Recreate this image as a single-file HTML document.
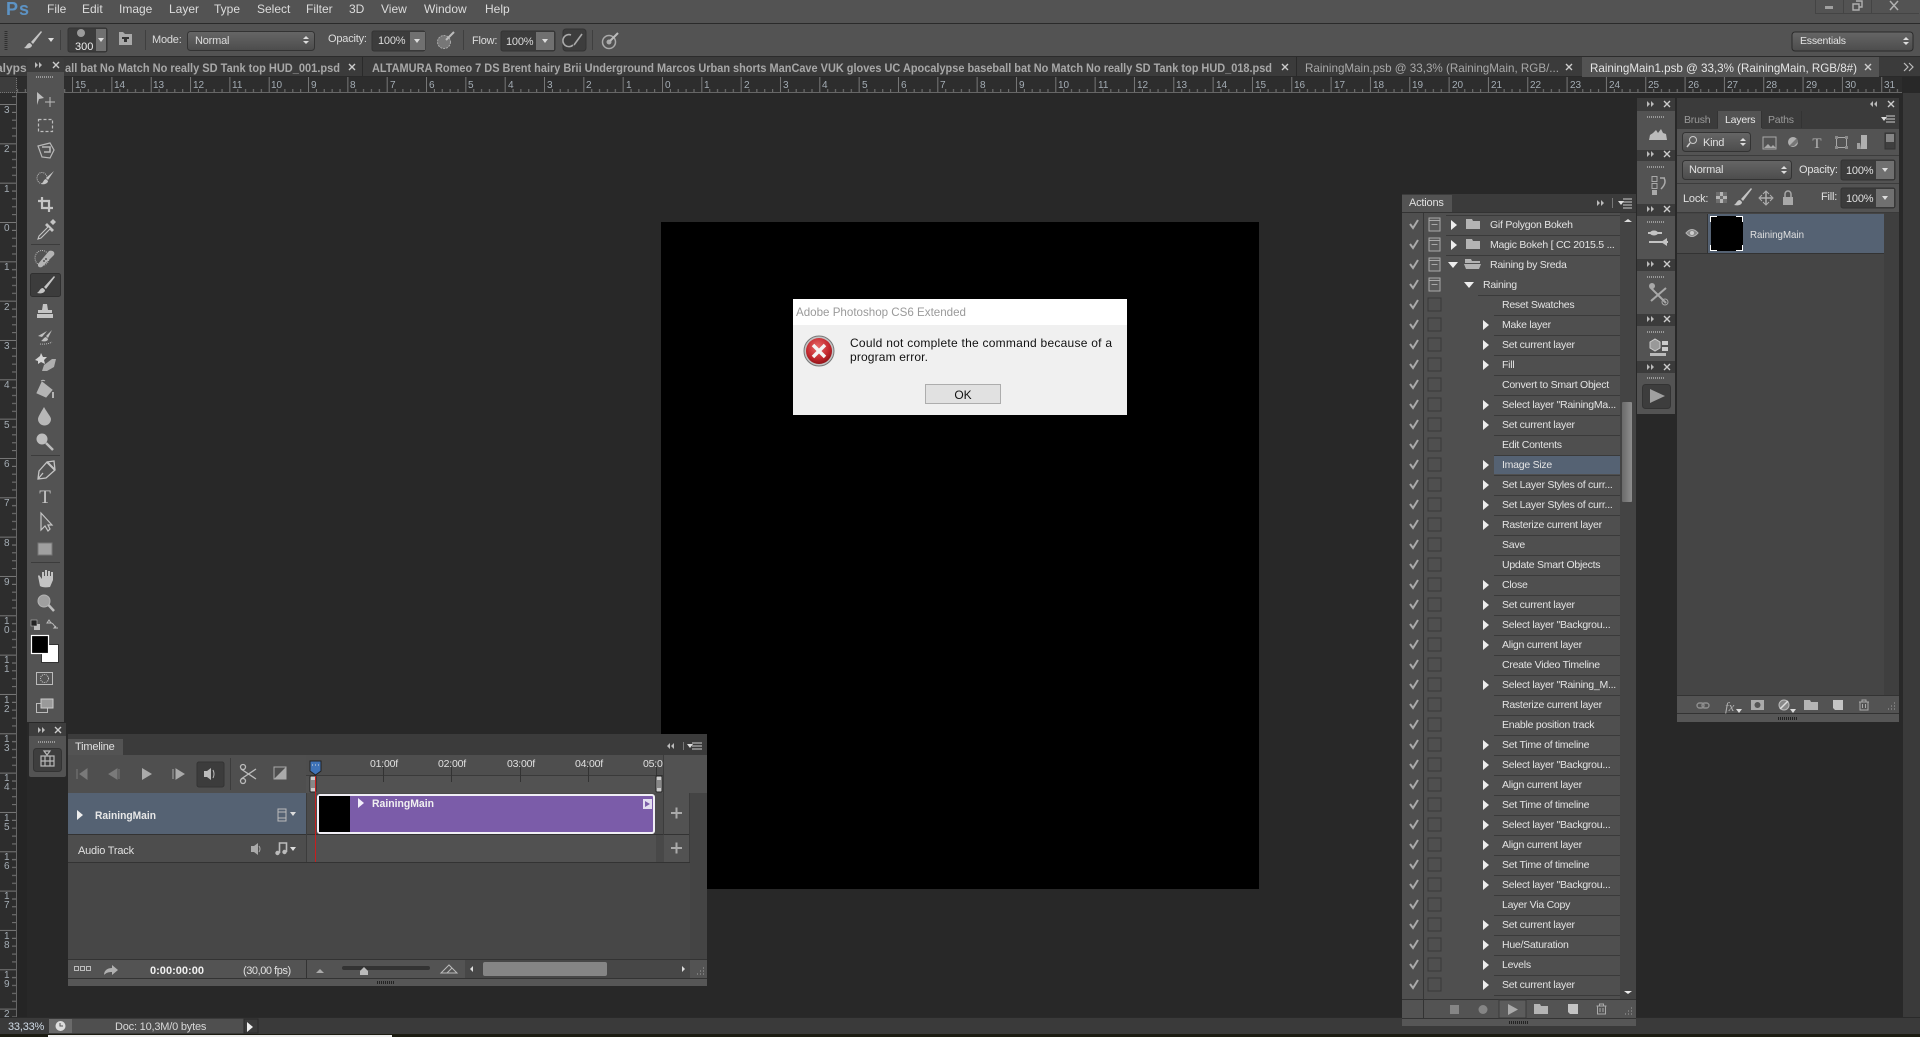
<!DOCTYPE html>
<html><head><meta charset="utf-8"><title>Photoshop</title>
<style>
html,body{margin:0;padding:0;background:#282828;width:1920px;height:1037px;overflow:hidden}
svg{display:block;font-family:"Liberation Sans",sans-serif}
.m{font-size:12px;fill:#dcdcdc}
.o{font-size:11px;fill:#dcdcdc;letter-spacing:-.2px}
.tb{font-size:12px;fill:#a8a8a8;font-weight:bold}
.rn{font-size:10px;fill:#a4adb5}
.a{font-size:10.5px;fill:#e4e4e4;letter-spacing:-.25px}
.p{font-size:11px;fill:#e0e0e0;letter-spacing:-.2px}
.d{font-size:12px;fill:#111}
</style></head><body>
<svg xmlns="http://www.w3.org/2000/svg" width="1920" height="1037" viewBox="0 0 1920 1037">
<defs>
<pattern id="rh" patternUnits="userSpaceOnUse" x="662" y="77" width="39.33" height="16">
<path d="M.5 0V16M8.4 12V16M16.2 12V16M24.1 12V16M32 12V16" stroke="#777" stroke-width="1" fill="none"/></pattern>
<pattern id="rv" patternUnits="userSpaceOnUse" x="0" y="222" width="16" height="39.33">
<path d="M0 .5H16M12 8.4H16M12 16.2H16M12 24.1H16M12 32H16" stroke="#777" stroke-width="1" fill="none"/></pattern>
<polygon id="ra" points="0,-5 6,0 0,5" fill="#eee"/>
<polygon id="da" points="-5,-3 5,-3 0,3" fill="#eee"/>
<path id="ck" d="M-4 0L-1 4L4 -4" stroke="#aaa" stroke-width="2" fill="none"/>
<rect id="bx" x="-6.5" y="-6.5" width="13" height="13" fill="none" stroke="#383838"/>
<g id="bd"><rect x="-5.5" y="-6.5" width="11" height="13" fill="#5a5a5a" stroke="#a8a8a8"/><path d="M-3 0H3" stroke="#a8a8a8"/><path d="M-5 -4H5" stroke="#a8a8a8"/></g>
<path id="fo" d="M-7 -5H-1L0 -3H7V5H-7Z" fill="#b4b4b4"/>
<path id="dbr" d="M-3 -3L0 0L-3 3ZM1 -3L4 0L1 3Z" fill="#bbb"/>
<path id="dbl" d="M0 -3L-3 0L0 3ZM4 -3L1 0L4 3Z" fill="#bbb"/>
<path id="xx" d="M-3 -3L3 3M3 -3L-3 3" stroke="#ccc" stroke-width="1.4"/>
<path id="gr" d="M-9 0H9" stroke="#999" stroke-width="2" stroke-dasharray="1 1"/>
<path id="brush" d="M9 -9L-1 2L1 4L10 -8ZM-2 3C-5 3 -5 6 -8 8C-4 9 0 8 0 5Z" fill="#c4c4c4"/>
<g id="trash" fill="none" stroke="#aaa"><path d="M-5 -3H5M-2 -3V-5H2V-3"/><path d="M-4 -3V5H4V-3M-1.5 -1V3M1.5 -1V3"/></g>
<path id="newl" d="M-5 -5H5V5H-3L-5 3Z" fill="#c4c4c4"/>
<g id="arrdrop"><polygon points="-3,-2 3,-2 0,2" fill="#ddd"/></g>
<g id="spin"><polygon points="-3,-1 3,-1 0,-4" fill="#ddd"/><polygon points="-3,1 3,1 0,4" fill="#ddd"/></g>
<g id="grip"><path d="M0 6h2M3 6h2M6 6h2M3 3h2M6 3h2M6 0h2" stroke="#888" stroke-width="1.4" stroke-dasharray="1 1"/></g>
<linearGradient id="sel" x1="0" y1="0" x2="0" y2="1"><stop offset="0" stop-color="#666"/><stop offset="1" stop-color="#4c4c4c"/></linearGradient>
<radialGradient id="err" cx=".45" cy=".35" r=".75"><stop offset="0" stop-color="#e86a6a"/><stop offset=".6" stop-color="#c2272d"/><stop offset="1" stop-color="#7d0b10"/></radialGradient>
<linearGradient id="scr" x1="0" y1="0" x2="1" y2="0"><stop offset="0" stop-color="#6a6a6a"/><stop offset="1" stop-color="#8e8e8e"/></linearGradient>
</defs>

<!-- base -->
<rect width="1920" height="1037" fill="#282828"/>
<!-- menu bar -->
<rect width="1920" height="23" fill="#535353"/>
<rect y="23" width="1920" height="1" fill="#2a2a2a"/>
<text x="6" y="15" font-size="18" font-weight="bold" fill="#5d93c4" style="letter-spacing:1px">Ps</text>
<text class="m" x="47" y="13">File</text><text class="m" x="82" y="13">Edit</text><text class="m" x="119" y="13">Image</text><text class="m" x="169" y="13">Layer</text><text class="m" x="214" y="13">Type</text><text class="m" x="257" y="13">Select</text><text class="m" x="306" y="13">Filter</text><text class="m" x="349" y="13">3D</text><text class="m" x="381" y="13">View</text><text class="m" x="424" y="13">Window</text><text class="m" x="485" y="13">Help</text>
<!-- window buttons -->
<path d="M1815.5 0V13.5H1919" fill="none" stroke="#444"/><path d="M1843.5 0V13M1871.5 0V13" stroke="#444"/>
<rect x="1825" y="6" width="8" height="3" fill="#a0a0a0"/><path d="M1853 4h6v6h-6zM1856 1h6v6h-3" fill="none" stroke="#b0b0b0" stroke-width="1.4"/><path d="M1890 1l8 9M1898 1l-8 9" stroke="#b0b0b0" stroke-width="1.5"/>

<!-- options bar -->
<rect y="24" width="1920" height="33" fill="#535353"/>
<rect y="56" width="1920" height="1" fill="#2c2c2c"/>
<path d="M6 31V50" stroke="#2f2f2f" stroke-width="3" stroke-dasharray="1 1"/>
<use href="#brush" x="32" y="40"/>
<use href="#arrdrop" x="51" y="40"/>
<path d="M60.5 30V50" stroke="#3f3f3f"/>
<rect x="68" y="28" width="39" height="24" rx="2" fill="#3c3c3c" stroke="#333"/><rect x="96" y="29" width="10" height="22" fill="#707070"/>
<circle cx="81" cy="33" r="4" fill="#bbb" opacity=".75"/>
<text x="75" y="50" font-size="11" fill="#eee">300</text><use href="#arrdrop" x="101" y="40"/>
<path d="M119 32h4l2 2h7v11h-13z" fill="#a9a9a9"/><path d="M122 37h7v2h-2v3h-3v-3h-2z" fill="#333"/>
<path d="M145.500 30V50" stroke="#3f3f3f"/>
<text class="o" x="152" y="43">Mode:</text>
<rect x="187.500" y="31.500" width="127" height="19" rx="3" fill="url(#sel)" stroke="#333"/>
<text class="o" x="195" y="44">Normal</text><use href="#spin" x="306" y="40"/>
<text class="o" x="328" y="42">Opacity:</text>
<rect x="372" y="31" width="53" height="20" rx="2" fill="#3c3c3c" stroke="#333"/><rect x="410" y="32" width="15" height="18" fill="#707070"/>
<text class="o" x="378" y="44">100%</text><use href="#arrdrop" x="417" y="41"/>
<circle cx="444" cy="42" r="6.500" fill="#777" stroke="#aaa" stroke-dasharray="2 1"/><path d="M446 40L454 32" stroke="#bbb" stroke-width="2"/>
<path d="M463.500 30V50" stroke="#3f3f3f"/>
<text class="o" x="472" y="44">Flow:</text>
<rect x="501" y="31" width="54" height="20" rx="2" fill="#3c3c3c" stroke="#333"/><rect x="536" y="32" width="18" height="18" fill="#707070"/>
<text class="o" x="506" y="45">100%</text><use href="#arrdrop" x="545" y="41"/>
<rect x="563" y="29" width="23" height="22" rx="3" fill="#3d3d3d" stroke="#333"/><path d="M571 35a6 6 0 1 0 2 10M574 45L582 34" fill="none" stroke="#aaa" stroke-width="1.600"/>
<path d="M592.500 30V50" stroke="#3f3f3f"/>
<circle cx="609" cy="42" r="6.500" fill="none" stroke="#aaa" stroke-width="1.500"/><circle cx="609" cy="42" r="2.500" fill="#aaa"/><path d="M610 41L618 33" stroke="#bbb" stroke-width="2"/>
<rect x="1792" y="32" width="121" height="19" rx="3" fill="url(#sel)" stroke="#2a2a2a"/>
<text x="1800" y="44" font-size="10.500" fill="#e4e4e4" style="letter-spacing:-.2px">Essentials</text><use href="#spin" x="1906" y="41"/>

<!-- tab bar -->
<rect y="57" width="1920" height="20" fill="#3b3b3b"/>
<rect y="76" width="1920" height="1" fill="#2a2a2a"/>
<text class="tb" x="-4" y="72">alypse</text>
<rect x="65" y="57" width="297" height="19" fill="#3b3b3b"/>
<text class="tb" x="65" y="72" textLength="275" lengthAdjust="spacingAndGlyphs">all bat No Match No really SD Tank top HUD_001.psd</text>
<use href="#xx" x="352" y="67"/><path d="M362.500 57V76" stroke="#2a2a2a"/>
<text class="tb" x="372" y="72" textLength="900" lengthAdjust="spacingAndGlyphs">ALTAMURA Romeo 7 DS Brent hairy Brii Underground Marcos Urban shorts ManCave VUK gloves UC Apocalypse baseball bat No Match No really SD Tank top HUD_018.psd</text>
<use href="#xx" x="1285" y="67"/><path d="M1296.500 57V76" stroke="#2a2a2a"/>
<text class="tb" x="1305" y="72" textLength="254" lengthAdjust="spacingAndGlyphs" style="font-weight:normal">RainingMain.psb @ 33,3% (RainingMain, RGB/...</text>
<use href="#xx" x="1569" y="67"/>
<rect x="1582" y="57" width="297" height="20" fill="#535353"/>
<text x="1590" y="72" font-size="12" fill="#e6e6e6" textLength="267" lengthAdjust="spacingAndGlyphs">RainingMain1.psb @ 33,3% (RainingMain, RGB/8#)</text>
<use href="#xx" x="1868" y="67"/>
<path d="M1904 63l4 4l-4 4M1909 63l4 4l-4 4" fill="none" stroke="#bbb" stroke-width="1.200"/>

<!-- right strip -->
<rect x="1903" y="93" width="17" height="925" fill="#3a3a3a"/>

<!-- rulers -->
<rect y="77" width="1902" height="16" fill="#2d2d2d"/>
<rect y="77" width="1902" height="16" fill="url(#rh)"/>
<rect y="92" width="1902" height="1" fill="#666"/>
<rect x="0" y="93" width="16" height="925" fill="#2d2d2d"/>
<rect x="0" y="93" width="16" height="925" fill="url(#rv)"/>
<rect x="16" y="93" width="1" height="925" fill="#666"/>
<rect x="17" y="93" width="10" height="925" fill="#252525"/>
<rect x="0" y="77" width="17" height="16" fill="#3d3d3d"/>
<path d="M0 92.500H16.500V77" fill="none" stroke="#777" stroke-dasharray="1 1"/>
<g class="rn">
<text class="rn" x="75" y="88">15</text><text class="rn" x="114" y="88">14</text><text class="rn" x="153" y="88">13</text><text class="rn" x="193" y="88">12</text><text class="rn" x="232" y="88">11</text><text class="rn" x="271" y="88">10</text><text class="rn" x="311" y="88">9</text><text class="rn" x="350" y="88">8</text><text class="rn" x="390" y="88">7</text><text class="rn" x="429" y="88">6</text><text class="rn" x="468" y="88">5</text><text class="rn" x="508" y="88">4</text><text class="rn" x="547" y="88">3</text><text class="rn" x="586" y="88">2</text><text class="rn" x="626" y="88">1</text><text class="rn" x="665" y="88">0</text>
<text class="rn" x="704" y="88">1</text><text class="rn" x="744" y="88">2</text><text class="rn" x="783" y="88">3</text><text class="rn" x="822" y="88">4</text><text class="rn" x="862" y="88">5</text><text class="rn" x="901" y="88">6</text><text class="rn" x="940" y="88">7</text><text class="rn" x="980" y="88">8</text><text class="rn" x="1019" y="88">9</text><text class="rn" x="1058" y="88">10</text><text class="rn" x="1098" y="88">11</text><text class="rn" x="1137" y="88">12</text><text class="rn" x="1176" y="88">13</text><text class="rn" x="1216" y="88">14</text><text class="rn" x="1255" y="88">15</text><text class="rn" x="1294" y="88">16</text><text class="rn" x="1334" y="88">17</text><text class="rn" x="1373" y="88">18</text><text class="rn" x="1412" y="88">19</text><text class="rn" x="1452" y="88">20</text><text class="rn" x="1491" y="88">21</text><text class="rn" x="1530" y="88">22</text><text class="rn" x="1570" y="88">23</text><text class="rn" x="1609" y="88">24</text><text class="rn" x="1648" y="88">25</text><text class="rn" x="1688" y="88">26</text><text class="rn" x="1727" y="88">27</text><text class="rn" x="1766" y="88">28</text><text class="rn" x="1806" y="88">29</text><text class="rn" x="1845" y="88">30</text><text class="rn" x="1884" y="88">31</text>
<text class="rn" x="4" y="113">3</text><text class="rn" x="4" y="152">2</text><text class="rn" x="4" y="192">1</text><text class="rn" x="4" y="231">0</text><text class="rn" x="4" y="270">1</text><text class="rn" x="4" y="310">2</text><text class="rn" x="4" y="349">3</text><text class="rn" x="4" y="388">4</text><text class="rn" x="4" y="428">5</text><text class="rn" x="4" y="467">6</text><text class="rn" x="4" y="506">7</text><text class="rn" x="4" y="546">8</text><text class="rn" x="4" y="585">9</text>
<text class="rn" x="4" y="624">1</text><text class="rn" x="4" y="633">0</text><text class="rn" x="4" y="663">1</text><text class="rn" x="4" y="672">1</text><text class="rn" x="4" y="703">1</text><text class="rn" x="4" y="712">2</text><text class="rn" x="4" y="742">1</text><text class="rn" x="4" y="751">3</text><text class="rn" x="4" y="781">1</text><text class="rn" x="4" y="790">4</text><text class="rn" x="4" y="821">1</text><text class="rn" x="4" y="830">5</text><text class="rn" x="4" y="860">1</text><text class="rn" x="4" y="869">6</text><text class="rn" x="4" y="899">1</text><text class="rn" x="4" y="908">7</text><text class="rn" x="4" y="939">1</text><text class="rn" x="4" y="948">8</text><text class="rn" x="4" y="978">1</text><text class="rn" x="4" y="987">9</text><text class="rn" x="4" y="1017">2</text>
</g>

<!-- canvas -->
<rect x="661" y="222" width="598" height="667" fill="#000"/>

<!-- toolbar -->
<rect x="27" y="72" width="37" height="650" fill="#535353"/>
<rect x="27" y="58" width="37" height="14" rx="2" fill="#3d3d3d"/>
<use href="#dbr" x="38" y="65"/><use href="#xx" x="56" y="65"/>
<use href="#gr" x="45" y="77"/>
<!-- move -->
<path d="M37 92L44 98L39 99L37 105Z" fill="#bdbdbd"/><path d="M45 102H55M50 97V107" stroke="#bdbdbd"/>
<!-- marquee -->
<rect x="38.500" y="119.500" width="14" height="12" fill="none" stroke="#bdbdbd" stroke-width="1.200" stroke-dasharray="3 2"/>
<!-- 3d lasso-like -->
<path d="M38 146L50 143L54 150L50 158L42 157L38 146Z" fill="none" stroke="#b8b8b8" stroke-width="1.200"/><path d="M42 147h8v5h-6" fill="none" stroke="#b8b8b8" stroke-width="1.600"/>
<!-- quick select -->
<ellipse cx="42" cy="178" rx="5" ry="5.500" fill="none" stroke="#c0c0c0" stroke-dasharray="1 1"/><path d="M54 171L46 178L48 180ZM46 179C43 180 44 182 41 184C45 185 48 183 48 181Z" fill="#c4c4c4"/>
<!-- crop -->
<path d="M42 197V208H53M38 201H49V212" fill="none" stroke="#c4c4c4" stroke-width="2.200"/>
<!-- eyedropper -->
<path d="M50 222L53 219L56 222L53 225ZM47 223L54 230L52 232L45 225Z" fill="#c4c4c4"/><path d="M48 227L39 236L38 239L41 238L50 229" fill="#555" stroke="#c4c4c4" stroke-width="1.100"/>
<rect x="31" y="244" width="29" height="1" fill="#3c3c3c"/>
<!-- heal -->
<ellipse cx="42" cy="258" rx="7" ry="7.500" fill="none" stroke="#bbb" stroke-dasharray="1 1"/><path d="M38 264L49 251Q52 250 54 252Q55 255 53 256L42 267Q39 268 38 266Z" fill="#b4b4b4"/><circle cx="46" cy="259" r="1" fill="#555"/><circle cx="44" cy="261" r="1" fill="#555"/>
<!-- brush active -->
<rect x="30.500" y="273.500" width="30" height="23" rx="2" fill="#3c3c3c" stroke="#303030"/>
<use href="#brush" x="45" y="285"/>
<!-- stamp -->
<g transform="translate(0,2)"><path d="M43 302h4l1 6h4v3H38v-3h4zM37 312H53V316H37Z" fill="#c4c4c4"/></g>
<!-- history -->
<path d="M52 330L46 336L48 338ZM46 337C43 338 43 340 41 341C45 342 48 341 48 339ZM47 331L38 336L42 337Z" fill="#c0c0c0"/><path d="M40 344a12 6 0 0 0 12 -2" fill="none" stroke="#bbb" stroke-dasharray="1 1"/>
<!-- eraser -->
<path d="M35 360l5-4l1-3l2 4l4 0l-3 3l1 4l-4-2l-3 2l0-3z" fill="#d4d4d4"/><path d="M44 365L52 359H56L54 367L47 371H42Z" fill="#aeaeae"/>
<!-- bucket -->
<g transform="translate(0,1)"><path d="M42 381L52 389L46 396L37 392ZM41 380a3 3 0 0 1 4 0" fill="#b4b4b4" stroke="#b4b4b4"/><path d="M53 391V397" stroke="#b4b4b4" stroke-width="2"/></g>
<!-- blur -->
<path d="M44 407C40 414 38 417 38 419A6.500 6.500 0 0 0 51 419C51 417 48 414 44 407Z" fill="#b8b8b8"/>
<!-- dodge -->
<g transform="translate(0,3)"><circle cx="42" cy="436" r="5.500" fill="#bdbdbd"/><path d="M46 440L53 447" stroke="#bdbdbd" stroke-width="2.500"/></g>
<rect x="31" y="455" width="29" height="1" fill="#3c3c3c"/>
<!-- pen -->
<g transform="translate(0,1)"><path d="M54 460L47 461L39 470L38 478L46 477L55 469ZM38 478L43 472" fill="none" stroke="#c4c4c4" stroke-width="1.300"/><path d="M47 461L55 469" stroke="#c4c4c4" stroke-width="2"/></g>
<!-- type -->
<text x="45" y="503" font-size="19" fill="#c4c4c4" font-family="Liberation Serif" text-anchor="middle">T</text>
<!-- path select -->
<path d="M41 513L41 530L45 526L48 531L50 529L48 525L52 525Z" fill="#585858" stroke="#c4c4c4" stroke-width="1.200"/>
<!-- rect -->
<rect x="38" y="543" width="14" height="12" fill="#a0a0a0" stroke="#777"/>
<rect x="31" y="562" width="29" height="1" fill="#3c3c3c"/>
<!-- hand -->
<g transform="translate(0,2)"><path d="M38 574L40 584Q43 586 50 585L53 578V570H51V574H50V569H48V574H47V568H45V574H44V570H42V577L39 573Z" fill="#c4c4c4"/></g>
<!-- zoom -->
<g transform="translate(0,1)"><circle cx="44" cy="600" r="6" fill="#a0a0a0" stroke="#b4b4b4"/><path d="M48.500 604L54 610" stroke="#bdbdbd" stroke-width="2.500"/></g>
<!-- fg/bg -->
<rect x="34" y="624" width="6" height="6" fill="#bbb"/><rect x="31" y="620" width="6" height="6" fill="#222" stroke="#bbb" stroke-width=".6"/>
<path d="M49 620l-2 3h4zM56 626l-2 2h4M50 622q0 0 3 2l3 4" fill="none" stroke="#bbb"/>
<rect x="41.500" y="644.500" width="17" height="18" fill="#fff" stroke="#333"/>
<rect x="31.500" y="635.500" width="17" height="18" fill="#000" stroke="#fff" stroke-width="1.200"/>
<!-- mask -->
<rect x="36.500" y="672.500" width="16" height="12" fill="#555" stroke="#bbb"/><circle cx="44.500" cy="678.500" r="4" fill="none" stroke="#ccc" stroke-dasharray="1 1"/>
<!-- screen -->
<rect x="36.500" y="703.500" width="11" height="9" fill="none" stroke="#bbb"/><rect x="41" y="699" width="12" height="9" fill="#9a9a9a" stroke="#ccc"/>
<!-- timeline toggle -->
<rect x="29" y="723" width="37" height="54" rx="2" fill="#535353"/>
<rect x="29" y="723" width="37" height="13" fill="#3d3d3d"/>
<use href="#dbr" x="41" y="730"/><use href="#xx" x="58" y="730"/>
<use href="#gr" x="47" y="742"/>
<rect x="33.500" y="748.500" width="28" height="23" rx="3" fill="#3e3e3e" stroke="#333"/>
<path d="M41 756H54V766H41ZM45 756V766M50 756V766M41 761H54M44 751L47 755L50 751Z" fill="none" stroke="#b8b8b8" stroke-width="1.200"/>

<!-- status bar -->
<rect y="1018" width="1920" height="16" fill="#3a3a3a"/>
<rect y="1017" width="1920" height="1" fill="#2a2a2a"/>
<rect x="49" y="1019" width="195" height="14" fill="#4f4f4f"/>
<rect x="49" y="1019" width="23" height="14" fill="#6a6a6a"/><circle cx="60.500" cy="1026" r="5" fill="#ddd"/><path d="M60 1023v3h3" stroke="#555" fill="none"/>
<text class="o" x="8" y="1030" style="fill:#d0dbe6">33,33%</text>
<text class="o" x="115" y="1030" style="fill:#d8d8d8">Doc: 10,3M/0 bytes</text>
<rect x="244" y="1019" width="14" height="14" fill="#3a3a3a" stroke="#2a2a2a"/><use href="#ra" x="247" y="1027"/>
<rect y="1034" width="1920" height="3" fill="#1c1c12"/>
<rect x="48" y="1035" width="344" height="2" fill="#eee"/>

<!-- timeline -->
<rect x="68" y="734" width="639" height="252" fill="#535353"/>
<rect x="68" y="734" width="639" height="21" fill="#3b3b3b"/>
<rect x="68" y="739" width="55" height="16" fill="#535353"/>
<text class="p" x="75" y="750">Timeline</text>
<use href="#dbl" x="670" y="746"/><path d="M683.500 742V750" stroke="#777"/>
<use href="#arrdrop" x="690" y="746"/><path d="M692 743H702M692 746H702M692 749H702" stroke="#ccc"/>
<rect x="68" y="755" width="238" height="38" fill="#4f4f4f"/>
<path d="M77 769V779M87 769L80 774L87 779Z" fill="#7a7a7a" stroke="#7a7a7a"/>
<path d="M109 774L117 769V779Z M119 769V779" fill="#7a7a7a" stroke="#7a7a7a"/>
<path d="M142 768L152 774L142 780Z" fill="#aaa"/>
<path d="M173 769V779M176 769L184 774L176 779Z" fill="#aaa" stroke="#aaa"/>
<rect x="197" y="762" width="27" height="25" rx="2" fill="#3c3c3c" stroke="#333"/>
<path d="M204 771H207L211 768V780L207 777H204Z" fill="#bbb"/><path d="M213 770q2 4 0 8" stroke="#bbb" fill="none"/>
<path d="M230.500 758V790" stroke="#3c3c3c"/>
<path d="M241 769L256 779M241 779L256 769" stroke="#bbb" stroke-width="1.300"/><circle cx="243" cy="767" r="2.500" fill="none" stroke="#bbb" stroke-width="1.300"/><circle cx="243" cy="781" r="2.500" fill="none" stroke="#bbb" stroke-width="1.300"/>
<rect x="274" y="767" width="12" height="12" fill="#4f4f4f" stroke="#aaa"/><path d="M274 779L286 767V779Z" fill="#aaa"/>
<!-- time ruler -->
<rect x="306" y="755" width="358" height="38" fill="#4e4e4e"/>
<rect x="664" y="755" width="43" height="38" fill="#525252"/>
<path d="M306 775.500H664" stroke="#3a3a3a"/>
<rect x="306" y="776" width="358" height="17" fill="#525252"/>
<path d="M383.500 765V782M451.500 765V782M520.500 765V782M588.500 765V782M656.500 765V782" stroke="#333"/>
<text class="p" x="370" y="767" style="font-size:10.500px">01:00f</text><text class="p" x="438" y="767" style="font-size:10.500px">02:00f</text><text class="p" x="507" y="767" style="font-size:10.500px">03:00f</text><text class="p" x="575" y="767" style="font-size:10.500px">04:00f</text>
<text class="p" x="643" y="767" style="font-size:10.500px">05:0</text>
<rect x="310" y="776" width="6" height="16" rx="1" fill="#ccc" stroke="#222"/><rect x="656" y="776" width="6" height="16" rx="1" fill="#ccc" stroke="#222"/>
<path d="M312 780v8M314 780v8M658 780v8M660 780v8" stroke="#444"/>
<path d="M310 761H321V771L315.500 775L310 771Z" fill="#3f73b8" stroke="#222"/><path d="M312 765h7" stroke="#ddd" stroke-dasharray="1 2"/>
<!-- tracks -->
<rect x="68" y="793" width="238" height="41" fill="#556273"/>
<rect x="306" y="793" width="358" height="41" fill="#4b4b4b"/>
<rect x="664" y="793" width="26" height="41" fill="#525252"/>
<rect x="690" y="793" width="17" height="167" fill="#444"/>
<rect x="68" y="834" width="622" height="1" fill="#333"/>
<rect x="68" y="835" width="238" height="27" fill="#4d4d4d"/>
<rect x="306" y="835" width="358" height="27" fill="#515151"/>
<rect x="664" y="835" width="26" height="27" fill="#525252"/>
<rect x="68" y="862" width="622" height="1" fill="#333"/>
<rect x="68" y="863" width="622" height="97" fill="#474747"/>
<path d="M306.500 793V862M663.500 755V862M689.500 793V862" stroke="#3c3c3c"/>
<path d="M315.500 776V862" stroke="#c81e1e"/>
<path d="M656 835V862H664V835Z" fill="#484848"/>
<use href="#ra" x="77" y="815"/>
<text x="95" y="819" font-size="11" font-weight="bold" fill="#e8e8e8" textLength="61" lengthAdjust="spacingAndGlyphs">RainingMain</text>
<rect x="278" y="809" width="8" height="12" fill="none" stroke="#bbb"/><path d="M278 812H286M278 818H286" stroke="#bbb"/><use href="#arrdrop" x="293" y="814"/>
<text class="p" x="78" y="854">Audio Track</text>
<path d="M251 846H254L258 843V855L254 852H251Z" fill="#aaa"/><path d="M259 846q2 3 0 6" stroke="#aaa" fill="none"/>
<path d="M279.500 853V843H286.500V852" stroke="#bbb" stroke-width="1.600" fill="none"/><circle cx="277.500" cy="853" r="2.200" fill="#bbb"/><circle cx="284.500" cy="852" r="2.200" fill="#bbb"/><use href="#arrdrop" x="293" y="849"/>
<!-- clip -->
<rect x="318" y="795" width="336" height="38" rx="2" fill="#7b5ca9" stroke="#f0eef5" stroke-width="2"/>
<rect x="319" y="796" width="31" height="36" fill="#000"/>
<path d="M358 798L364 803L358 808Z" fill="#f2eefa"/>
<text x="372" y="807" font-size="11" font-weight="bold" fill="#f0f0f0" textLength="62" lengthAdjust="spacingAndGlyphs">RainingMain</text>
<rect x="643" y="799" width="9" height="10" fill="#e2dcef"/><path d="M645 801L650 804L645 807Z" fill="#7b5ca9"/>
<path d="M671 813H682M676.500 807.500V818.500" stroke="#aaa" stroke-width="2"/>
<path d="M671 848H682M676.500 842.500V853.500" stroke="#aaa" stroke-width="2"/>
<!-- timeline bottom -->
<rect x="68" y="959" width="639" height="1" fill="#333"/>
<rect x="68" y="960" width="397" height="18" fill="#535353"/>
<rect x="465" y="960" width="225" height="18" fill="#474747"/>
<rect x="690" y="960" width="17" height="18" fill="#535353"/>
<rect x="68" y="978" width="639" height="1" fill="#333"/>
<rect x="68" y="979" width="639" height="7" fill="#565656"/>
<path d="M377 982.500H395" stroke="#222" stroke-width="3" stroke-dasharray="1 1"/>
<path d="M74.500 966.500h4v4h-4zM80.500 966.500h4v4h-4zM86.500 966.500h4v4h-4z" fill="none" stroke="#bbb"/>
<path d="M104 975c0-5 4-7 8-7v-3l6 5l-6 5v-3c-4 0-6 1-8 3z" fill="#b0b0b0"/>
<text x="150" y="974" font-size="11" font-weight="bold" fill="#f0f0f0" textLength="54" lengthAdjust="spacingAndGlyphs">0:00:00:00</text>
<text class="p" x="243" y="974" textLength="48">(30,00 fps)</text>
<path d="M306.500 960V978" stroke="#333"/>
<path d="M316 973L320 969L324 973Z" fill="#aaa"/>
<rect x="342" y="966" width="88" height="4" rx="2" fill="#333"/>
<path d="M360 975V971L364 967L368 971V975Z" fill="#bbb"/>
<path d="M441 973L449 965L457 973ZM447 973L452 968" fill="none" stroke="#bbb"/>
<path d="M473 966v6l-3-3z" fill="#ddd"/>
<rect x="483" y="962" width="124" height="14" rx="2" fill="#858585"/>
<path d="M682 966v6l3-3z" fill="#ddd"/>
<use href="#grip" x="697" y="968"/>

<!-- dialog -->
<rect x="793" y="299" width="334" height="116" fill="#f0f0f0"/>
<rect x="793" y="299" width="334" height="26" fill="#fff"/>
<text x="796" y="316" font-size="12" fill="#9a9a9a" textLength="170" lengthAdjust="spacingAndGlyphs">Adobe Photoshop CS6 Extended</text>
<circle cx="819" cy="351" r="15" fill="#c4c4c4" stroke="#777"/><circle cx="819" cy="351" r="13" fill="url(#err)"/>
<path d="M813 345L825 357M825 345L813 357" stroke="#f4f4f4" stroke-width="3.500"/>
<text class="d" x="850" y="347" textLength="262" lengthAdjust="spacing">Could not complete the command because of a</text>
<text class="d" x="850" y="361" textLength="78" lengthAdjust="spacing">program error.</text>
<rect x="925.500" y="384.500" width="75" height="19" fill="#e1e1e1" stroke="#adadad"/>
<text class="d" x="963" y="399" text-anchor="middle">OK</text>

<!-- actions panel -->
<rect x="1402" y="194" width="234" height="832" fill="#4f4f4f"/>
<rect x="1402" y="194" width="234" height="18" fill="#3b3b3b"/>
<rect x="1402" y="195" width="50" height="17" fill="#535353"/>
<rect x="1402" y="212" width="234" height="1" fill="#333"/>
<text class="p" x="1409" y="206">Actions</text>
<use href="#dbr" x="1600" y="203"/><path d="M1612.500 198V208" stroke="#777"/>
<use href="#arrdrop" x="1621" y="203"/><path d="M1623 199H1632M1623 202H1632M1623 205H1632M1623 208H1632" stroke="#ccc"/>
<rect x="1620" y="213" width="16" height="787" fill="#444"/>
<rect x="1622" y="402" width="10" height="100" rx="1" fill="url(#scr)"/>
<polygon points="1628,219 1632,222 1624,222" fill="#ddd"/>
<polygon points="1624,991 1632,991 1628,994" fill="#eee"/>
<path d="M1423.500 213V1000" stroke="#363636"/>
<rect x="1494" y="456" width="126" height="18" fill="#556273"/>
<path stroke="#3a3a3a" fill="none" d="M1446 215.500H1620M1446 235.500H1620M1446 255.500H1620M1478 295.500H1620M1494 315.500H1620M1494 335.500H1620M1494 355.500H1620M1494 375.500H1620M1494 395.500H1620M1494 415.500H1620M1494 435.500H1620M1494 455.500H1620M1494 475.500H1620M1494 495.500H1620M1494 515.500H1620M1494 535.500H1620M1494 555.500H1620M1494 575.500H1620M1494 595.500H1620M1494 615.500H1620M1494 635.500H1620M1494 655.500H1620M1494 675.500H1620M1494 695.500H1620M1494 715.500H1620M1494 735.500H1620M1494 755.500H1620M1494 775.500H1620M1494 795.500H1620M1494 815.500H1620M1494 835.500H1620M1494 855.500H1620M1494 875.500H1620M1494 895.500H1620M1494 915.500H1620M1494 935.500H1620M1494 955.500H1620M1494 975.500H1620M1494 995.500H1620"/>
<g>
<use href="#ck" x="1414" y="224"/><use href="#ck" x="1414" y="244"/><use href="#ck" x="1414" y="264"/><use href="#ck" x="1414" y="284"/><use href="#ck" x="1414" y="304"/><use href="#ck" x="1414" y="324"/><use href="#ck" x="1414" y="344"/><use href="#ck" x="1414" y="364"/><use href="#ck" x="1414" y="384"/><use href="#ck" x="1414" y="404"/><use href="#ck" x="1414" y="424"/><use href="#ck" x="1414" y="444"/><use href="#ck" x="1414" y="464"/><use href="#ck" x="1414" y="484"/><use href="#ck" x="1414" y="504"/><use href="#ck" x="1414" y="524"/><use href="#ck" x="1414" y="544"/><use href="#ck" x="1414" y="564"/><use href="#ck" x="1414" y="584"/><use href="#ck" x="1414" y="604"/><use href="#ck" x="1414" y="624"/><use href="#ck" x="1414" y="644"/><use href="#ck" x="1414" y="664"/><use href="#ck" x="1414" y="684"/><use href="#ck" x="1414" y="704"/><use href="#ck" x="1414" y="724"/><use href="#ck" x="1414" y="744"/><use href="#ck" x="1414" y="764"/><use href="#ck" x="1414" y="784"/><use href="#ck" x="1414" y="804"/><use href="#ck" x="1414" y="824"/><use href="#ck" x="1414" y="844"/><use href="#ck" x="1414" y="864"/><use href="#ck" x="1414" y="884"/><use href="#ck" x="1414" y="904"/><use href="#ck" x="1414" y="924"/><use href="#ck" x="1414" y="944"/><use href="#ck" x="1414" y="964"/><use href="#ck" x="1414" y="984"/>
<use href="#bd" x="1434.500" y="224.500"/><use href="#bd" x="1434.500" y="244.500"/><use href="#bd" x="1434.500" y="264.500"/><use href="#bd" x="1434.500" y="284.500"/>
<use href="#bx" x="1434.500" y="304.500"/><use href="#bx" x="1434.500" y="324.500"/><use href="#bx" x="1434.500" y="344.500"/><use href="#bx" x="1434.500" y="364.500"/><use href="#bx" x="1434.500" y="384.500"/><use href="#bx" x="1434.500" y="404.500"/><use href="#bx" x="1434.500" y="424.500"/><use href="#bx" x="1434.500" y="444.500"/><use href="#bx" x="1434.500" y="464.500"/><use href="#bx" x="1434.500" y="484.500"/><use href="#bx" x="1434.500" y="504.500"/><use href="#bx" x="1434.500" y="524.500"/><use href="#bx" x="1434.500" y="544.500"/><use href="#bx" x="1434.500" y="564.500"/><use href="#bx" x="1434.500" y="584.500"/><use href="#bx" x="1434.500" y="604.500"/><use href="#bx" x="1434.500" y="624.500"/><use href="#bx" x="1434.500" y="644.500"/><use href="#bx" x="1434.500" y="664.500"/><use href="#bx" x="1434.500" y="684.500"/><use href="#bx" x="1434.500" y="704.500"/><use href="#bx" x="1434.500" y="724.500"/><use href="#bx" x="1434.500" y="744.500"/><use href="#bx" x="1434.500" y="764.500"/><use href="#bx" x="1434.500" y="784.500"/><use href="#bx" x="1434.500" y="804.500"/><use href="#bx" x="1434.500" y="824.500"/><use href="#bx" x="1434.500" y="844.500"/><use href="#bx" x="1434.500" y="864.500"/><use href="#bx" x="1434.500" y="884.500"/><use href="#bx" x="1434.500" y="904.500"/><use href="#bx" x="1434.500" y="924.500"/><use href="#bx" x="1434.500" y="944.500"/><use href="#bx" x="1434.500" y="964.500"/><use href="#bx" x="1434.500" y="984.500"/>
<use href="#ra" x="1451" y="225"/><use href="#ra" x="1451" y="245"/><use href="#da" x="1453" y="265"/><use href="#da" x="1469" y="285"/>
<use href="#fo" x="1473" y="224"/><use href="#fo" x="1473" y="244"/>
<path d="M1465 259h6l1 2h8v2h-15zM1464 264h17l-2 5h-13z" fill="#b4b4b4"/>
<use href="#ra" x="1483" y="325"/><use href="#ra" x="1483" y="345"/><use href="#ra" x="1483" y="365"/><use href="#ra" x="1483" y="405"/><use href="#ra" x="1483" y="425"/><use href="#ra" x="1483" y="465"/><use href="#ra" x="1483" y="485"/><use href="#ra" x="1483" y="505"/><use href="#ra" x="1483" y="525"/><use href="#ra" x="1483" y="585"/><use href="#ra" x="1483" y="605"/><use href="#ra" x="1483" y="625"/><use href="#ra" x="1483" y="645"/><use href="#ra" x="1483" y="685"/><use href="#ra" x="1483" y="745"/><use href="#ra" x="1483" y="765"/><use href="#ra" x="1483" y="785"/><use href="#ra" x="1483" y="805"/><use href="#ra" x="1483" y="825"/><use href="#ra" x="1483" y="845"/><use href="#ra" x="1483" y="865"/><use href="#ra" x="1483" y="885"/><use href="#ra" x="1483" y="925"/><use href="#ra" x="1483" y="945"/><use href="#ra" x="1483" y="965"/><use href="#ra" x="1483" y="985"/>
</g>
<text class="a" x="1490" y="228">Gif Polygon Bokeh</text>
<text class="a" x="1490" y="248">Magic Bokeh [ CC 2015.5 ...</text>
<text class="a" x="1490" y="268">Raining by Sreda</text>
<text class="a" x="1483" y="288">Raining</text>
<text class="a" x="1502" y="308">Reset Swatches</text>
<text class="a" x="1502" y="328">Make layer</text>
<text class="a" x="1502" y="348">Set current layer</text>
<text class="a" x="1502" y="368">Fill</text>
<text class="a" x="1502" y="388">Convert to Smart Object</text>
<text class="a" x="1502" y="408">Select layer "RainingMa...</text>
<text class="a" x="1502" y="428">Set current layer</text>
<text class="a" x="1502" y="448">Edit Contents</text>
<text class="a" x="1502" y="468">Image Size</text>
<text class="a" x="1502" y="488">Set Layer Styles of curr...</text>
<text class="a" x="1502" y="508">Set Layer Styles of curr...</text>
<text class="a" x="1502" y="528">Rasterize current layer</text>
<text class="a" x="1502" y="548">Save</text>
<text class="a" x="1502" y="568">Update Smart Objects</text>
<text class="a" x="1502" y="588">Close</text>
<text class="a" x="1502" y="608">Set current layer</text>
<text class="a" x="1502" y="628">Select layer "Backgrou...</text>
<text class="a" x="1502" y="648">Align current layer</text>
<text class="a" x="1502" y="668">Create Video Timeline</text>
<text class="a" x="1502" y="688">Select layer "Raining_M...</text>
<text class="a" x="1502" y="708">Rasterize current layer</text>
<text class="a" x="1502" y="728">Enable position track</text>
<text class="a" x="1502" y="748">Set Time of timeline</text>
<text class="a" x="1502" y="768">Select layer "Backgrou...</text>
<text class="a" x="1502" y="788">Align current layer</text>
<text class="a" x="1502" y="808">Set Time of timeline</text>
<text class="a" x="1502" y="828">Select layer "Backgrou...</text>
<text class="a" x="1502" y="848">Align current layer</text>
<text class="a" x="1502" y="868">Set Time of timeline</text>
<text class="a" x="1502" y="888">Select layer "Backgrou...</text>
<text class="a" x="1502" y="908">Layer Via Copy</text>
<text class="a" x="1502" y="928">Set current layer</text>
<text class="a" x="1502" y="948">Hue/Saturation</text>
<text class="a" x="1502" y="968">Levels</text>
<text class="a" x="1502" y="988">Set current layer</text>
<rect x="1402" y="999" width="234" height="1" fill="#333"/>
<rect x="1402" y="1000" width="234" height="18" fill="#535353"/>
<rect x="1402" y="1018" width="234" height="1" fill="#333"/>
<rect x="1402" y="1019" width="234" height="7" fill="#565656"/>
<path d="M1509 1022.500H1528" stroke="#222" stroke-width="3" stroke-dasharray="1 1"/>
<path d="M1423.500 1000V1018" stroke="#333"/>
<rect x="1450" y="1005" width="9" height="9" fill="#858585"/><circle cx="1483" cy="1009.500" r="4.500" fill="#858585"/>
<rect x="1499" y="1000" width="27" height="18" fill="#5c5c5c" stroke="#3a3a3a"/><path d="M1508 1004L1518 1009.500L1508 1015Z" fill="#aaa"/>
<use href="#fo" x="1541" y="1009"/><use href="#newl" x="1573" y="1009"/><use href="#trash" x="1601.500" y="1009"/><use href="#grip" x="1625" y="1008"/>

<!-- collapsed icon strips -->
<g>
<rect x="1637" y="98" width="38" height="53" fill="#535353"/><rect x="1637" y="98" width="38" height="13" fill="#3b3b3b"/><use href="#dbr" x="1650" y="104"/><use href="#xx" x="1667" y="104"/><use href="#gr" x="1656" y="117"/>
<path d="M1649 140L1650 135L1653 133L1656 130L1658 133L1661 129L1663 133L1666 134L1667 140Z" fill="#bbb"/>
<rect x="1637" y="150" width="38" height="54" fill="#535353"/><rect x="1637" y="150" width="38" height="11" fill="#3b3b3b"/><use href="#dbr" x="1650" y="154"/><use href="#xx" x="1667" y="154"/><use href="#gr" x="1656" y="167"/>
<path d="M1652 176.500h5v5h-5zM1652 183.500h5v5h-5z" fill="none" stroke="#aaa"/><rect x="1652" y="190" width="5" height="5" fill="#aaa"/><path d="M1660 178h5M1664 178q3 5 -3 11" fill="none" stroke="#aaa" stroke-width="1.500"/>
<rect x="1637" y="204" width="38" height="55" fill="#535353"/><rect x="1637" y="204" width="38" height="12" fill="#3b3b3b"/><use href="#dbr" x="1650" y="209"/><use href="#xx" x="1667" y="209"/><use href="#gr" x="1656" y="222"/>
<path d="M1648 233h14M1649 242h19" stroke="#c4c4c4" stroke-width="2"/><ellipse cx="1654" cy="233" rx="4" ry="2.500" fill="#c4c4c4"/><path d="M1661 242L1667 238V246Z" fill="#c4c4c4"/>
<rect x="1637" y="259" width="38" height="55" fill="#535353"/><rect x="1637" y="259" width="38" height="12" fill="#3b3b3b"/><use href="#dbr" x="1650" y="264"/><use href="#xx" x="1667" y="264"/><use href="#gr" x="1656" y="277"/>
<path d="M1650 287L1666 303M1666 288L1651 301" stroke="#a8a8a8" stroke-width="2"/><circle cx="1652" cy="286" r="3" fill="#a8a8a8"/><circle cx="1665" cy="302" r="3" fill="none" stroke="#a8a8a8"/>
<rect x="1637" y="314" width="38" height="49" fill="#535353"/><rect x="1637" y="314" width="38" height="12" fill="#3b3b3b"/><use href="#dbr" x="1650" y="319"/><use href="#xx" x="1667" y="319"/><use href="#gr" x="1656" y="332"/>
<path d="M1650 342l5-3l5 3v6l-5 3l-5-3z" fill="#999" stroke="#ccc"/><rect x="1662" y="341" width="6" height="4" fill="#ccc"/><rect x="1662" y="347" width="6" height="4" fill="#ccc"/><rect x="1650" y="353" width="16" height="3" fill="#bbb"/>
<rect x="1637" y="361" width="38" height="53" fill="#535353"/><rect x="1637" y="361" width="38" height="12" fill="#3b3b3b"/><use href="#dbr" x="1650" y="367"/><use href="#xx" x="1667" y="367"/><use href="#gr" x="1656" y="378"/>
<rect x="1642.500" y="384.500" width="28" height="24" rx="3" fill="#3d3d3d" stroke="#333"/><path d="M1650 389L1665 396L1650 403Z" fill="#a0a0a0"/>
</g>

<!-- layers panel -->
<rect x="1677" y="98" width="222" height="624" fill="#535353"/>
<rect x="1677" y="98" width="222" height="31" fill="#3b3b3b"/>
<use href="#dbl" x="1873" y="104"/><use href="#xx" x="1891" y="104"/>
<rect x="1718" y="111" width="44" height="18" fill="#535353"/>
<path d="M1717.500 111V128M1761.500 111V128M1801.500 111V128" stroke="#333"/>
<text class="p" x="1684" y="123" style="fill:#9a9a9a;font-size:10.500px">Brush</text>
<text class="p" x="1725" y="123" style="fill:#e8e8e8;font-size:10.500px">Layers</text>
<text class="p" x="1768" y="123" style="fill:#9a9a9a;font-size:10.500px">Paths</text>
<use href="#arrdrop" x="1884" y="119"/><path d="M1886 116H1895M1886 119H1895M1886 122H1895" stroke="#ccc"/>
<rect x="1677" y="155" width="222" height="1" fill="#3c3c3c"/><rect x="1677" y="183" width="222" height="1" fill="#3c3c3c"/>
<rect x="1682.500" y="132.500" width="68" height="19" rx="3" fill="url(#sel)" stroke="#333"/>
<circle cx="1693" cy="140" r="3.500" fill="none" stroke="#ccc"/><path d="M1690 143L1687 147" stroke="#ccc" stroke-width="1.500"/>
<text class="p" x="1703" y="146">Kind</text><use href="#spin" x="1743" y="142"/>
<rect x="1763" y="137" width="13" height="12" fill="none" stroke="#a8a8a8"/><path d="M1764 148l4-4l3 3l2-2l3 3z" fill="#a8a8a8"/>
<circle cx="1793" cy="142" r="5" fill="#b0b0b0"/><path d="M1789 146L1797 138L1798 142L1794 146Z" fill="#777"/>
<text x="1817" y="148" font-size="15" text-anchor="middle" fill="#b4b4b4" font-family="Liberation Serif">T</text>
<rect x="1836.500" y="137.500" width="10" height="10" fill="none" stroke="#a8a8a8"/><path d="M1835 136h3v3h-3zM1845 136h3v3h-3zM1835 146h3v3h-3zM1845 146h3v3h-3z" fill="#8a8a8a"/>
<path d="M1861 135h6v14h-6z" fill="#b0b0b0"/><path d="M1860 143h-3v6h4" fill="#a0a0a0"/>
<rect x="1885" y="133" width="10" height="16" fill="#3f3f3f" stroke="#333"/><rect x="1886" y="134" width="8" height="8" fill="#858585"/>
<rect x="1682.500" y="160.500" width="109" height="19" rx="3" fill="url(#sel)" stroke="#333"/>
<text class="p" x="1689" y="173">Normal</text><use href="#spin" x="1784" y="170"/>
<text class="p" x="1799" y="173">Opacity:</text>
<rect x="1841" y="160" width="54" height="20" rx="2" fill="#3c3c3c" stroke="#333"/><rect x="1876" y="161" width="18" height="18" fill="#707070"/>
<text class="p" x="1846" y="174">100%</text><use href="#arrdrop" x="1885" y="170"/>
<text class="p" x="1683" y="202">Lock:</text>
<rect x="1716" y="192" width="11" height="11" fill="#b4b4b4"/><path d="M1716 192h4v4h-4zM1723 192h4v4h-4zM1720 196h3v3h-3zM1716 199h4v4h-4zM1723 199h4v4h-4z" fill="#6e6e6e"/>
<use href="#brush" x="1742" y="197"/>
<path d="M1760 198H1772M1766 192V204" stroke="#b0b0b0" stroke-width="1.500"/><path d="M1763 194l3-3l3 3M1763 202l3 3l3-3M1762 195l-3 3l3 3M1770 195l3 3l-3 3" fill="none" stroke="#b0b0b0"/>
<rect x="1783" y="197" width="10" height="8" fill="#a8a8a8"/><path d="M1785 197v-3a3 3 0 0 1 6 0v3" fill="none" stroke="#a8a8a8" stroke-width="1.500"/>
<text class="p" x="1821" y="200">Fill:</text>
<rect x="1841" y="188" width="54" height="20" rx="2" fill="#3c3c3c" stroke="#333"/><rect x="1876" y="189" width="18" height="18" fill="#707070"/>
<text class="p" x="1846" y="202">100%</text><use href="#arrdrop" x="1885" y="198"/>
<rect x="1677" y="212" width="222" height="1" fill="#3a3a3a"/>
<rect x="1677" y="213" width="222" height="483" fill="#454545"/>
<rect x="1884" y="213" width="15" height="483" fill="#3f3f3f"/>
<rect x="1677" y="214" width="30" height="39" fill="#4a4a4a"/>
<rect x="1708" y="214" width="176" height="39" fill="#556273"/>
<rect x="1677" y="253" width="207" height="1" fill="#333"/>
<path d="M1707.500 214V253" stroke="#333"/>
<path d="M1686 233q6 -7 12 0q-6 7 -12 0z" fill="#888" stroke="#b4b4b4"/><circle cx="1692" cy="233" r="2" fill="#ccc"/>
<rect x="1711" y="216" width="32" height="35" fill="#000"/>
<path d="M1717 216.500H1710.500V222M1736 216.500H1742.500V222M1717 250.500H1710.500V245M1736 250.500H1742.500V245" fill="none" stroke="#fff"/>
<text class="p" x="1750" y="238" style="letter-spacing:0;font-size:10.500px" textLength="54" lengthAdjust="spacingAndGlyphs">RainingMain</text>
<rect x="1677" y="695" width="222" height="1" fill="#333"/>
<rect x="1677" y="696" width="222" height="18" fill="#535353"/>
<rect x="1677" y="713" width="222" height="1" fill="#333"/>
<rect x="1677" y="714" width="222" height="8" fill="#565656"/>
<path d="M1778 718.500H1797" stroke="#222" stroke-width="3" stroke-dasharray="1 1"/>
<rect x="1697" y="703" width="7" height="5" rx="2.500" fill="none" stroke="#8f8f8f" stroke-width="1.400"/><rect x="1702" y="703" width="7" height="5" rx="2.500" fill="none" stroke="#8f8f8f" stroke-width="1.400"/>
<text x="1725" y="711" font-size="13" font-style="italic" fill="#b0b0b0" font-family="Liberation Serif">fx</text><use href="#arrdrop" x="1739" y="711"/>
<rect x="1751" y="700" width="13" height="10" fill="#aaa"/><circle cx="1757.500" cy="705" r="3" fill="#555"/>
<circle cx="1784" cy="705" r="5" fill="#888" stroke="#bbb"/><path d="M1780 709L1788 701" stroke="#ddd" stroke-width="1.500"/><use href="#arrdrop" x="1793" y="711"/>
<use href="#fo" x="1811" y="705"/><use href="#newl" x="1838" y="705"/><use href="#trash" x="1864" y="705"/>
<use href="#grip" x="1888" y="703"/>
</svg>
</body></html>
